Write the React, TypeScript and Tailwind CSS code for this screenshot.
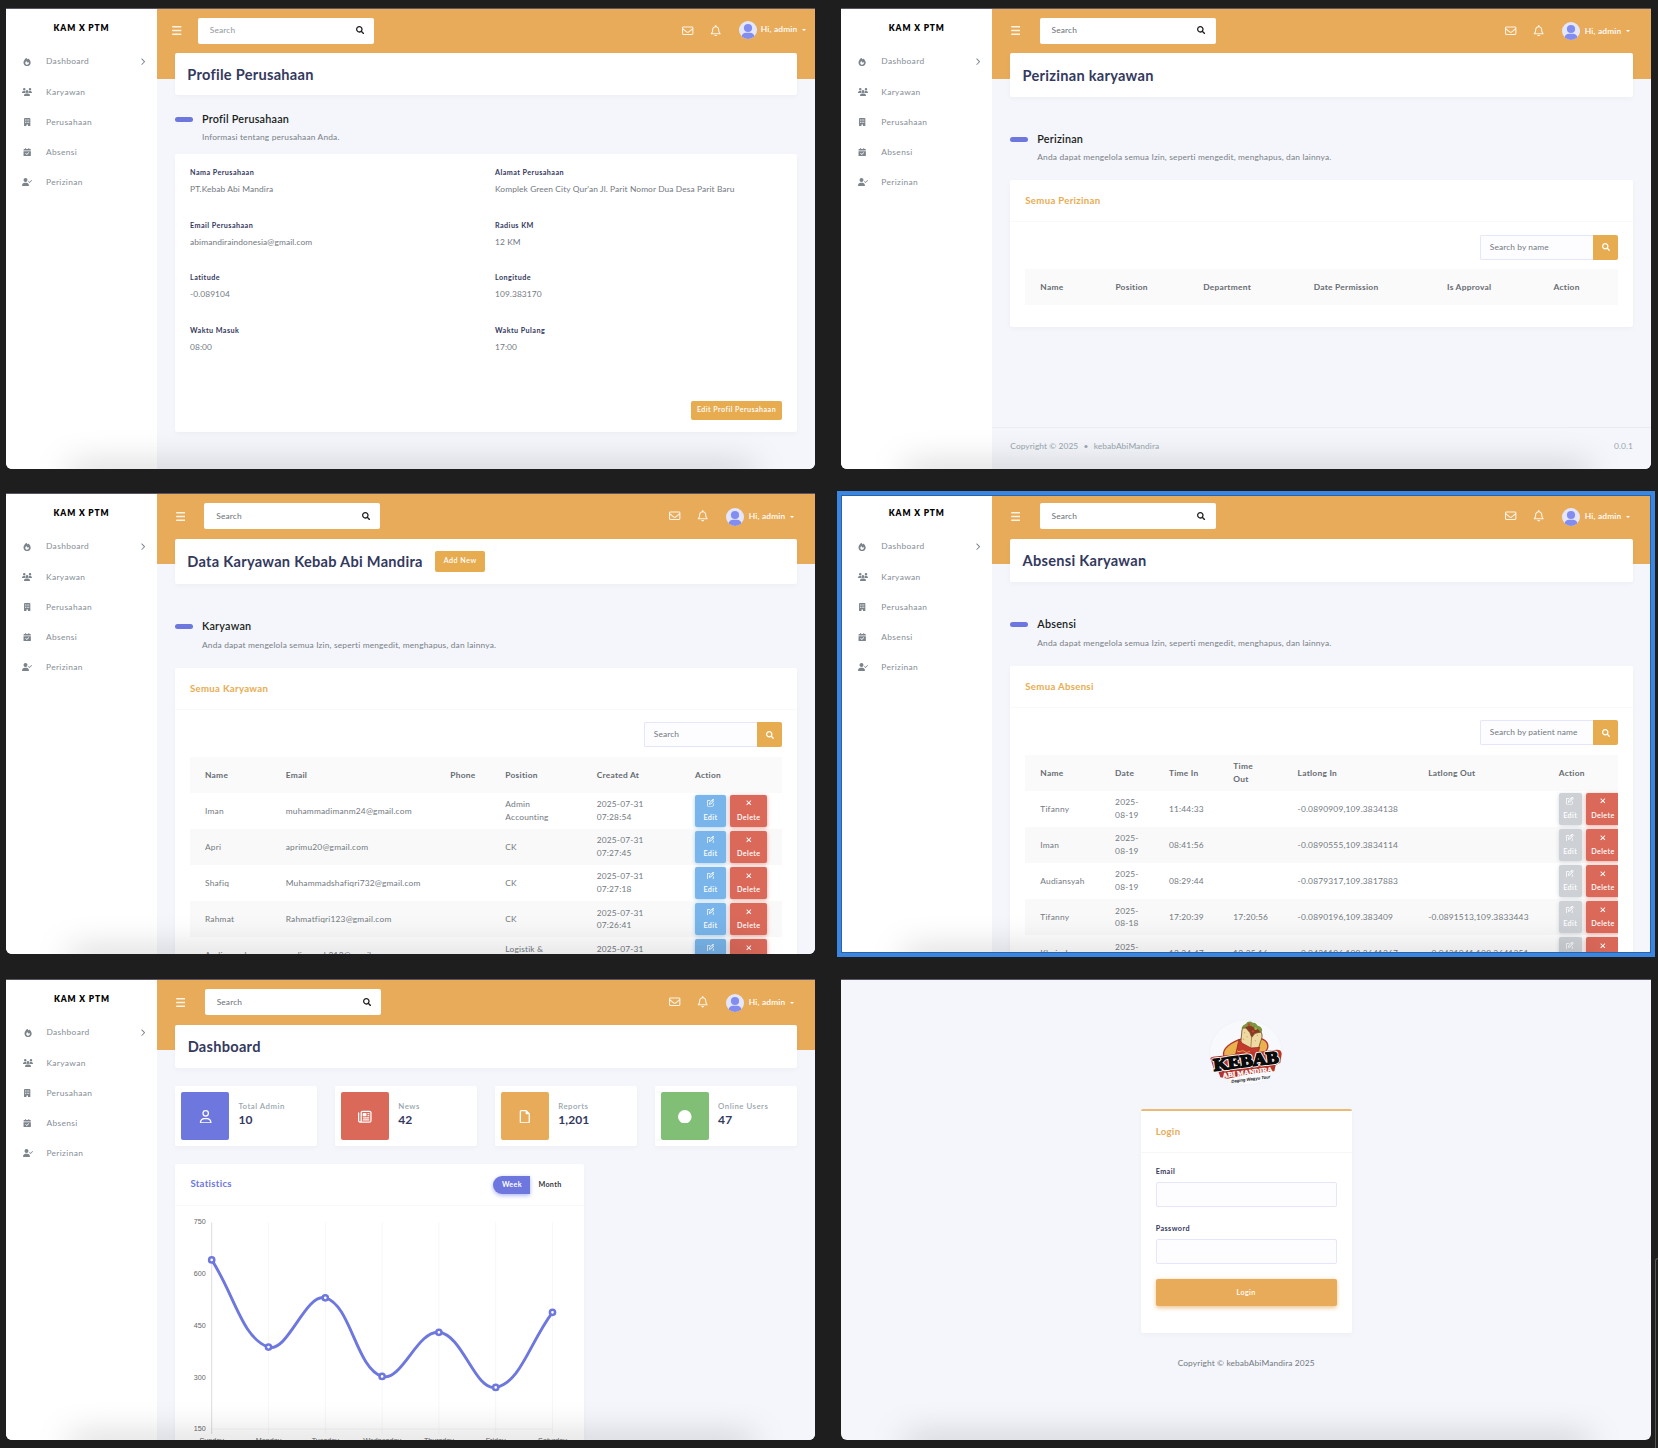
import type { ReactNode } from "react";
import { FaSearch } from "react-icons/fa";
import {
  FaBuilding,
  FaCalendarCheck,
  FaChevronRight,
  FaCircle,
  FaFire,
  FaRegBell,
  FaRegEnvelope,
  FaRegFile,
  FaRegNewspaper,
  FaRegPenToSquare,
  FaRegUser,
  FaUserCheck,
  FaUsers,
  FaXmark,
} from "react-icons/fa6";

/* ---------- shared pieces ---------- */

function Window({ children, className = "" }: { children: ReactNode; className?: string }) {
  return (
    <div
      className={`relative h-[461px] overflow-hidden rounded-b-[6px] border-t border-[#5a5464] bg-[#f4f6fb] ${className}`}
    >
      {children}
      <div className="pointer-events-none absolute right-[62px] -bottom-[10px] left-[64px] h-[10px] shadow-[0_0_34px_rgba(0,0,0,0.36)]" />
    </div>
  );
}

const menu = [
  { label: "Dashboard", icon: <FaFire size={8.2} />, arrow: true },
  { label: "Karyawan", icon: <FaUsers size={10} /> },
  { label: "Perusahaan", icon: <FaBuilding size={8.4} /> },
  { label: "Absensi", icon: <FaCalendarCheck size={8.4} /> },
  { label: "Perizinan", icon: <FaUserCheck size={10} /> },
];

function Sidebar() {
  return (
    <aside className="h-full w-[151px] shrink-0 bg-white shadow-[0_2px_5px_rgba(0,0,0,0.03)]">
      <div className="flex h-[37px] items-center justify-center pt-[1.500px] text-[8.4px] font-extrabold tracking-[0.88px] text-black">
        KAM X PTM
      </div>
      <nav className="pt-[0.700px]">
        {menu.map((m) => (
          <div key={m.label} className="flex h-[30.1px] items-center pr-[11px] pl-4 text-[#868e96]">
            <span className="flex w-[10.5px] justify-center text-[#7b838b]">{m.icon}</span>
            <span className="ml-[13.5px] text-[8.4px] tracking-[0.36px]">{m.label}</span>
            {m.arrow && <FaChevronRight size={7.4} className="ml-auto text-[#7b838b]" />}
          </div>
        ))}
      </nav>
    </aside>
  );
}

function Topbar({ compact = false, tall = true }: { compact?: boolean; tall?: boolean }) {
  return (
    <header
      className={`mb-px flex shrink-0 items-center ${tall ? "h-[44px]" : "h-[43px]"} ${
        compact ? "pr-[9px] pl-[15.3px]" : "pr-[21px] pl-[18.5px]"
      }`}
    >
      <svg viewBox="0 0 19 18" className="h-[9px] w-[9.5px] text-white/85">
        <path d="M1.3 1.5h16.4M1.3 9h16.4M1.3 16.5h16.4" stroke="currentColor" strokeWidth="2.8" strokeLinecap="round" />
      </svg>
      <div
        className={`flex h-[26px] w-[176px] items-center justify-between rounded-[2px] bg-white pr-[10px] pl-[12px] ${
          compact ? "ml-[16px]" : "ml-[19.3px]"
        }`}
      >
        <span className={`text-[8.4px] tracking-[0.12px] ${compact ? "text-[#92979c]" : "text-[#6c7278]"}`}>Search</span>
        <FaSearch size={8.2} className="text-[#1e1e1e]" />
      </div>
      <div className="ml-auto flex items-center text-white">
        <FaRegEnvelope size={11.4} className="text-white/85" />
        <FaRegBell size={11.4} className="ml-[16.7px] text-white/85" />
        <div className={`ml-[17px] flex items-center ${compact ? "-mt-[1.500px]" : "pt-[1.500px]"}`}>
          <svg viewBox="0 0 36 36" className="size-[18px]">
            <clipPath id="avatar">
              <circle cx="18" cy="18" r="18" />
            </clipPath>
            <g clipPath="url(#avatar)">
              <rect width="36" height="36" fill="#e4e7fb" />
              <circle cx="18" cy="14" r="8.2" fill="#838df0" />
              <path d="M5 36v-4c0-5 4-8.500 9-8.500h8c5 0 9 3.500 9 8.500v4z" fill="#838df0" />
            </g>
          </svg>
          <span className={`text-[8.4px] font-semibold tracking-[0.18px] ${compact ? "ml-[4px]" : "ml-[5px]"}`}>
            Hi, admin
          </span>
          <span className="ml-[4.500px] border-x-[2.600px] border-t-[2.600px] border-x-transparent border-t-white" />
        </div>
      </div>
    </header>
  );
}

function TitleCard({ title, height, children }: { title: string; height: string; children?: ReactNode }) {
  return (
    <div
      className={`mx-[18px] flex shrink-0 items-center rounded-[2px] bg-white pl-[12.3px] shadow-[0_2px_5px_rgba(0,0,0,0.03)] ${height}`}
    >
      <h1 className="pt-[2.500px] text-[14.6px] leading-none font-bold tracking-[0.27px] whitespace-nowrap text-[#34395e]">
        {title}
      </h1>
      {children}
    </div>
  );
}

function SectionHeading({ title, sub, className }: { title: string; sub: string; className: string }) {
  return (
    <div className={`shrink-0 px-[18px] ${className}`}>
      <div className="flex h-[18px] items-center">
        <span className="h-[5px] w-[18px] rounded-full bg-[#6d77de]" />
        <h2 className="ml-[9px] text-[10.8px] font-semibold tracking-[0.22px] text-[#191d21]">{title}</h2>
      </div>
      <p className="mt-[2px] ml-[27px] h-[14px] text-[8.4px] leading-[14.500px] tracking-[0.165px] text-[#7a8087]">{sub}</p>
    </div>
  );
}

function Screen({
  children,
  className = "",
  shift = "",
}: {
  children: ReactNode;
  className?: string;
  shift?: string;
}) {
  return (
    <Window className={className}>
      <div className={`flex h-full ${shift}`}>
        <Sidebar />
        <main className="flex min-w-0 flex-1 flex-col bg-[linear-gradient(#e8ab59_70px,#f4f6fb_70px)]">{children}</main>
      </div>
    </Window>
  );
}

function TableCard({
  title,
  placeholder,
  className = "",
  children,
}: {
  title: string;
  placeholder: string;
  className?: string;
  children: ReactNode;
}) {
  return (
    <section
      className={`mx-[18px] shrink-0 rounded-[2px] bg-white text-[8.4px] text-[#73797f] shadow-[0_2px_5px_rgba(0,0,0,0.03)] ${className}`}
    >
      <div className="flex h-[42px] items-center border-b border-[#f9f9f9] pt-[1.500px] pl-[15px] text-[9.6px] font-bold tracking-[0.32px] text-[#e7ac50]">
        {title}
      </div>
      <div className="flex justify-end px-[15px] pt-[12.5px] pb-[9.5px]">
        <div className="flex h-[25.300px] w-[113px] items-center rounded-l-[2px] border border-r-0 border-[#e4e6fc] bg-[#fdfdff] pl-[8.500px] tracking-[0.09px] whitespace-nowrap">
          {placeholder}
        </div>
        <div className="flex h-[25.300px] w-[24.7px] items-center justify-center rounded-r-[2px] bg-[#e7ac50] text-white">
          <FaSearch size={8} />
        </div>
      </div>
      <div className="mx-[15px] overflow-hidden">{children}</div>
    </section>
  );
}

function DataTable({ head, cols, rows }: { head: ReactNode[]; cols: number[]; rows: ReactNode[][] }) {
  return (
    <table className="w-full table-fixed border-collapse leading-[12.6px]">
      <colgroup>
        {cols.map((c, i) => (
          <col key={i} style={{ width: c }} />
        ))}
      </colgroup>
      <thead>
        <tr className="h-[36px] bg-[#fafafa] text-left text-[#666c72]">
          {head.map((h, i) => (
            <th key={i} className="p-0 pl-[15px] align-middle font-bold tracking-[0.26px]">
              {h}
            </th>
          ))}
        </tr>
      </thead>
      <tbody>
        {rows.map((r, i) => (
          <tr key={i} className="h-[36.1px] even:bg-[#f9f9f9]">
            {r.map((c, j) => (
              <td key={j} className="p-0 pl-[15px] align-middle tracking-[0.19px]">
                {c}
              </td>
            ))}
          </tr>
        ))}
      </tbody>
    </table>
  );
}

function RowButtons({ disabled = false }: { disabled?: boolean }) {
  const base =
    "flex h-[32.400px] shrink-0 flex-col items-center rounded-[2px] pt-[4.800px] text-[7.2px] leading-[10px] font-semibold text-white";
  return (
    <div className="flex gap-[4.300px]">
      <span
        className={`${base} ${
          disabled ? "w-[23px] bg-[#cdd1d6] shadow-[0_1px_4px_#d5d9de]" : "w-[31px] bg-[#79b5ea] shadow-[0_1px_4px_#acd2f3]"
        }`}
      >
        <FaRegPenToSquare size={7.6} />
        <span className="mt-[5.500px] tracking-[0.4px]">Edit</span>
      </span>
      <span className={`${base} bg-[#da695a] shadow-[0_1px_4px_#eaa59c] ${disabled ? "w-[34px]" : "w-[37px]"}`}>
        <FaXmark size={7.6} />
        <span className="mt-[5.500px] tracking-[0.4px]">Delete</span>
      </span>
    </div>
  );
}

const stack = (a: string, b: string) => (
  <>
    {a}
    <br />
    {b}
  </>
);

/* ---------- company profile ---------- */

const profile = [
  ["Nama Perusahaan", "PT.Kebab Abi Mandira"],
  ["Alamat Perusahaan", "Komplek Green City Qur'an Jl. Parit Nomor Dua Desa Parit Baru"],
  ["Email Perusahaan", "abimandiraindonesia@gmail.com"],
  ["Radius KM", "12 KM"],
  ["Latitude", "-0.089104"],
  ["Longitude", "109.383170"],
  ["Waktu Masuk", "08:00"],
  ["Waktu Pulang", "17:00"],
];

function ProfileScreen() {
  return (
    <Screen>
      <Topbar compact tall={false} />
      <TitleCard title="Profile Perusahaan" height="h-[42px]" />
      <SectionHeading title="Profil Perusahaan" sub="Informasi tentang perusahaan Anda." className="mt-[15px]" />
      <section className="mx-[18px] mt-[10px] flex h-[278px] flex-col rounded-[2px] bg-white px-[15px] pt-[12px] shadow-[0_2px_5px_rgba(0,0,0,0.03)]">
        <dl className="grid auto-rows-[52.500px] grid-cols-[305px_1fr]">
          {profile.map(([k, v]) => (
            <div key={k}>
              <dt className="h-[14px] text-[7.2px] leading-[14px] font-bold tracking-[0.44px] text-[#34395e]">{k}</dt>
              <dd className="mt-[2px] h-[14px] text-[8.4px] leading-[14px] tracking-[0.1px] whitespace-nowrap text-[#73797f]">
                {v}
              </dd>
            </div>
          ))}
        </dl>
        <div className="mt-auto mb-3 flex h-[19.500px] w-[91px] items-center justify-center self-end rounded-[2px] bg-[#e7ac50] pt-px text-[7.2px] font-semibold tracking-[0.43px] whitespace-nowrap text-white">
          Edit Profil Perusahaan
        </div>
      </section>
    </Screen>
  );
}

/* ---------- permissions ---------- */

const manageText = "Anda dapat mengelola semua Izin, seperti mengedit, menghapus, dan lainnya.";

function PermissionScreen() {
  return (
    <Screen>
      <Topbar tall={false} />
      <TitleCard title="Perizinan karyawan" height="h-[44px]" />
      <SectionHeading title="Perizinan" sub={manageText} className="mt-[33px]" />
      <TableCard title="Semua Perizinan" placeholder="Search by name" className="mt-4 h-[147px]">
        <DataTable
          head={["Name", "Position", "Department", "Date Permission", "Is Approval", "Action"]}
          cols={[75, 87.7, 110.4, 133.2, 106.4, 79.3]}
          rows={[]}
        />
      </TableCard>
      <footer className="mt-auto flex h-[42px] justify-between border-t border-[#e9ebf0] px-[18px] pt-[11px] text-[8.4px] leading-[14px] tracking-[0.07px] text-[#98a6ad]">
        <span>
          Copyright © 2025 <span className="mx-[3px]">•</span> kebabAbiMandira
        </span>
        <span>0.0.1</span>
      </footer>
    </Screen>
  );
}

/* ---------- employees ---------- */

const employees = [
  ["Iman", "muhammadimanm24@gmail.com", stack("Admin", "Accounting"), "07:28:54"],
  ["Apri", "aprimu20@gmail.com", "CK", "07:27:45"],
  ["Shafiq", "Muhammadshafiqri732@gmail.com", "CK", "07:27:18"],
  ["Rahmat", "Rahmatfiqri123@gmail.com", "CK", "07:26:41"],
  ["Audiansyah", "audiansyah212@gmail.com", stack("Logistik &", "Gudang"), "07:25:58"],
] as [string, string, ReactNode, string][];

function EmployeeScreen() {
  return (
    <Screen>
      <Topbar />
      <TitleCard title="Data Karyawan Kebab Abi Mandira" height="h-[45px]">
        <span className="ml-[12.500px] flex h-[21.500px] w-[50px] items-center justify-center rounded-[2px] bg-[#e7ac50] text-[7.2px] font-semibold tracking-[0.48px] text-white">
          Add New
        </span>
      </TitleCard>
      <SectionHeading title="Karyawan" sub={manageText} className="mt-[33.500px]" />
      <TableCard title="Semua Karyawan" placeholder="Search" className="mt-4">
        <DataTable
          head={["Name", "Email", "Phone", "Position", "Created At", "Action"]}
          cols={[80.7, 164.6, 55, 91.4, 98.3, 102]}
          rows={employees.map(([name, email, pos, time]) => [
            name,
            email,
            "",
            pos,
            stack("2025-07-31", time),
            <RowButtons key="b" />,
          ])}
        />
      </TableCard>
    </Screen>
  );
}

/* ---------- attendance ---------- */

const attendance = [
  ["Tifanny", "08-19", "11:44:33", "", "-0.0890909,109.3834138", ""],
  ["Iman", "08-19", "08:41:56", "", "-0.0890555,109.3834114", ""],
  ["Audiansyah", "08-19", "08:29:44", "", "-0.0879317,109.3817883", ""],
  ["Tifanny", "08-18", "17:20:39", "17:20:56", "-0.0890196,109.383409", "-0.0891513,109.3833443"],
  ["Khairul", "08-18", "12:34:47", "12:35:16", "-0.0431196,109.3641367", "-0.0431041,109.3641351"],
];

function AttendanceScreen() {
  return (
    <Screen>
      <Topbar />
      <TitleCard title="Absensi Karyawan" height="h-[43px]" />
      <SectionHeading title="Absensi" sub={manageText} className="mt-[33.500px]" />
      <TableCard title="Semua Absensi" placeholder="Search by patient name" className="mt-4">
        <DataTable
          head={["Name", "Date", "Time In", stack("Time", "Out"), "Latlong In", "Latlong Out", "Action"]}
          cols={[74.7, 53.8, 64.3, 64.2, 130.4, 130.4, 74.2]}
          rows={attendance.map(([name, day, tin, tout, lin, lout]) => [
            name,
            stack("2025-", day),
            tin,
            tout,
            lin,
            lout,
            <RowButtons key="b" disabled />,
          ])}
        />
      </TableCard>
    </Screen>
  );
}

/* ---------- dashboard ---------- */

const stats = [
  { label: "Total Admin", value: "10", bg: "bg-[#6d77de]", icon: <FaRegUser size={13.4} /> },
  { label: "News", value: "42", bg: "bg-[#da695a]", icon: <FaRegNewspaper size={13.6} /> },
  { label: "Reports", value: "1,201", bg: "bg-[#e8ab59]", icon: <FaRegFile size={13.6} /> },
  { label: "Online Users", value: "47", bg: "bg-[#81be76]", icon: <FaCircle size={13.6} /> },
];

const days = ["Sunday", "Monday", "Tuesday", "Wednesday", "Thursday", "Friday", "Saturday"];
const visits = [640, 387, 530, 302, 430, 270, 488];
const px = (i: number) => 36.7 + i * 56.8;
const py = (v: number) => 16 + ((750 - v) / 150) * 51.7;

function linePath(values: number[]) {
  const pts = values.map((v, i) => ({ x: px(i), y: py(v) }));
  const ctrl = pts.map((p, i) => {
    const a = pts[i - 1] ?? p;
    const b = pts[i + 1] ?? p;
    const d1 = Math.hypot(p.x - a.x, p.y - a.y);
    const d2 = Math.hypot(b.x - p.x, b.y - p.y);
    const f1 = (0.4 * d1) / (d1 + d2);
    const f2 = (0.4 * d2) / (d1 + d2);
    return {
      in: [p.x - f1 * (b.x - a.x), p.y - f1 * (b.y - a.y)],
      out: [p.x + f2 * (b.x - a.x), p.y + f2 * (b.y - a.y)],
    };
  });
  return pts
    .map((p, i) => (i === 0 ? `M${p.x} ${p.y}` : `C${ctrl[i - 1].out} ${ctrl[i].in} ${p.x} ${p.y}`))
    .join(" ");
}

function Chart() {
  return (
    <svg width="408" height="240" className="block font-['Liberation_Sans'] text-[7.2px]" fill="#666">
      {[750, 600, 450, 300, 150].map((v) => (
        <text key={v} x="30.700" y={py(v) + 2.4} textAnchor="end">
          {v}
        </text>
      ))}
      {days.map((d, i) => (
        <g key={d}>
          <line x1={px(i)} x2={px(i)} y1="16.500" y2="228" stroke={i === 0 ? "#dcdcdc" : "#f7f7f7"} strokeWidth="1" />
          <text x={px(i)} y="236.500" textAnchor="middle">
            {d}
          </text>
        </g>
      ))}
      <line x1="37" x2="378" y1="223" y2="223" stroke="#f4f4f4" />
      <path d={linePath(visits)} fill="none" stroke="#6d77de" strokeWidth="2.900" />
      {visits.map((v, i) => (
        <circle key={i} cx={px(i)} cy={py(v)} r="2.600" fill="#fff" stroke="#6d77de" strokeWidth="2.500" />
      ))}
    </svg>
  );
}

function DashboardScreen() {
  return (
    <Screen shift="pl-[0.400px]">
      <Topbar />
      <TitleCard title="Dashboard" height="h-[43px]" />
      <div className="mx-[18px] mt-[18px] grid shrink-0 grid-cols-4 gap-[18px]">
        {stats.map((s) => (
          <div key={s.label} className="flex h-[60px] rounded-[2px] bg-white p-[6px] shadow-[0_2px_5px_rgba(0,0,0,0.03)]">
            <div className={`flex size-[48px] shrink-0 items-center justify-center rounded-[2px] text-white ${s.bg}`}>
              <span className="pt-px">{s.icon}</span>
            </div>
            <div className="ml-[9px] pt-[6.500px]">
              <p className="h-[14px] text-[7.8px] leading-[14px] font-semibold tracking-[0.5px] whitespace-nowrap text-[#98a6ad]">
                {s.label}
              </p>
              <p className="text-[12px] leading-[14px] font-bold tracking-[0.09px] text-[#34395e]">{s.value}</p>
            </div>
          </div>
        ))}
      </div>
      <section className="mt-[18px] ml-[18px] w-[409px] shrink-0 rounded-t-[2px] bg-white shadow-[0_2px_5px_rgba(0,0,0,0.03)]">
        <div className="flex h-[42px] items-center border-b border-[#f9f9f9] pr-[15px] pl-[15px]">
          <h3 className="text-[9.6px] font-bold tracking-[0.3px] text-[#6d77de]">Statistics</h3>
          <div className="ml-auto flex h-[18px] text-[7.2px] leading-[18px] font-bold tracking-[0.32px]">
            <span className="w-[37px] rounded-l-full bg-[#6d77de] text-center text-white shadow-[0_1.500px_4px_#acb5f6]">
              Week
            </span>
            <span className="w-[39px] pl-[8px] text-[#34393d]">Month</span>
          </div>
        </div>
        <Chart />
      </section>
    </Screen>
  );
}

/* ---------- login ---------- */

function KebabLogo() {
  return (
    <svg viewBox="55 40 230 207" className="h-[69px] w-[76.700px]">
      <ellipse cx="169" cy="143.500" rx="109" ry="98" fill="#f8f9fc" stroke="#eff0f5" strokeWidth="2" />
      <ellipse cx="168" cy="136" rx="68" ry="35" transform="rotate(-14 168 136)" fill="#e9b24f" stroke="#b5342b" strokeWidth="4" />
      <path d="M157 74c-3-8 5-14 12-17 4-8 14-9 20-3 9-1 12 5 15 9 9 1 15 9 13 16l-6 12-48-6z" fill="#7d9440" />
      <path d="M166 70c8-8 20-8 28 0 10 2 20 8 16 18l-20 10-22-14z" fill="#8a3a22" />
      <circle cx="178" cy="60" r="4" fill="#c8452c" />
      <circle cx="198" cy="72" r="4" fill="#9db44b" />
      <circle cx="190" cy="80" r="3.500" fill="#c8452c" />
      <path
        d="M157 74q4-6 12-4l12 14 5 14 10-12 18-4c5 8 4 18-1 28l-10 32-52-2z"
        fill="#eed9a2"
        stroke="#6d4a25"
        strokeWidth="2.500"
      />
      <path d="M186 96l-3 38" stroke="#8a6334" strokeWidth="2" fill="none" />
      <g fill="#b98f52">
        <circle cx="165" cy="84" r="1.600" />
        <circle cx="172" cy="96" r="1.600" />
        <circle cx="162" cy="104" r="1.600" />
        <circle cx="203" cy="92" r="1.600" />
        <circle cx="197" cy="108" r="1.600" />
      </g>
      <path d="M148 104l-10 44 66 4 6-24-26 2-26-14z" fill="#c23a2c" stroke="#8f241c" strokeWidth="2" />
      <path d="M142 138c8 8 14-4 22 2s10 2 16 0" fill="none" stroke="#e9b24f" strokeWidth="3" />
      <path d="M64 166q-6-8 6-10l184-20q22-4 22 12l-4 26-14 8-4 18q-80 8-140 22l-22-4-6-18-14-8z" fill="#b5342b" />
      <g transform="rotate(-7 170 180)" textAnchor="middle" fontFamily="'Liberation Serif', serif" fontWeight="bold">
        <text
          x="170"
          y="186"
          fontSize="52"
          textLength="196"
          lengthAdjust="spacingAndGlyphs"
          fill="#0c0c0c"
          stroke="#fff"
          strokeWidth="10"
          strokeLinejoin="round"
          paintOrder="stroke"
        >
          KEBAB
        </text>
        <text x="170" y="186" fontSize="52" textLength="196" lengthAdjust="spacingAndGlyphs" fill="#0c0c0c" stroke="#0c0c0c" strokeWidth="5">
          KEBAB
        </text>
        <text x="171" y="211" fontSize="22" textLength="150" lengthAdjust="spacingAndGlyphs" fill="#fff" stroke="#fff" strokeWidth="1">
          ABI MANDIRA
        </text>
        <text
          x="178"
          y="229"
          fontSize="13"
          fontStyle="italic"
          fontFamily="'Liberation Sans', sans-serif"
          textLength="118"
          lengthAdjust="spacingAndGlyphs"
          fill="#111"
        >
          Daging Wagyu Tour
        </text>
      </g>
    </svg>
  );
}

function LoginScreen() {
  return (
    <Window>
      <div className="flex flex-col items-center pt-[38px]">
        <KebabLogo />
        <section className="mt-[22px] h-[223.500px] w-[211px] rounded-[2px] border-t-2 border-[#ebbb76] bg-white shadow-[0_2px_5px_rgba(0,0,0,0.03)]">
          <div className="flex h-[42px] items-center border-b border-[#f6f6f6] pt-px pl-[15px] text-[9.6px] font-bold tracking-[0.32px] text-[#e8ab59]">
            Login
          </div>
          <form className="px-[15px] pt-[12px] text-[7.2px] font-bold tracking-[0.44px] text-[#34395e]">
            <p className="h-[14px] leading-[14px]">Email</p>
            <div className="mt-[2.700px] h-[25.300px] rounded-[2px] border border-[#e4e6fc] bg-[#fdfdff]" />
            <p className="mt-[15.500px] h-[14px] leading-[14px]">Password</p>
            <div className="mt-[2.700px] h-[25.300px] rounded-[2px] border border-[#e4e6fc] bg-[#fdfdff]" />
            <div className="mt-[15px] flex h-[26.300px] items-center justify-center rounded-[2px] bg-[#e8ab59] pt-px font-semibold text-white shadow-[0_1.500px_4px_#efc78f]">
              Login
            </div>
          </form>
        </section>
        <p className="mt-[23px] text-[8.4px] leading-[14px] tracking-[0.11px] text-[#73797f]">
          Copyright © kebabAbiMandira 2025
        </p>
      </div>
    </Window>
  );
}

export default function App() {
  return (
    <div className="relative h-[1448px] w-[1658px] overflow-hidden bg-[#1e1e1e] pt-2 pl-[6px] font-['Lato',sans-serif]">
      <div className="grid grid-cols-[809px_809.700px] gap-x-[26.300px]">
        <ProfileScreen />
        <PermissionScreen />
      </div>
      <div className="mt-6 grid grid-cols-[809px_809.700px] gap-x-[26.300px]">
        <EmployeeScreen />
        <div className="relative">
          <AttendanceScreen />
          <div className="pointer-events-none absolute -inset-x-[4.500px] -top-[2px] -bottom-[3px] border-[4.500px] border-[#3b86e0] ring-1 ring-[#2b62a8] ring-inset" />
        </div>
      </div>
      <div className="mt-[25px] grid grid-cols-[809px_809.700px] gap-x-[26.300px]">
        <DashboardScreen />
        <LoginScreen />
      </div>
      <div className="absolute right-0 bottom-0 h-[190px] w-[3px] rounded-tl-[3px] border-t border-l border-[#565656]" />
    </div>
  );
}
